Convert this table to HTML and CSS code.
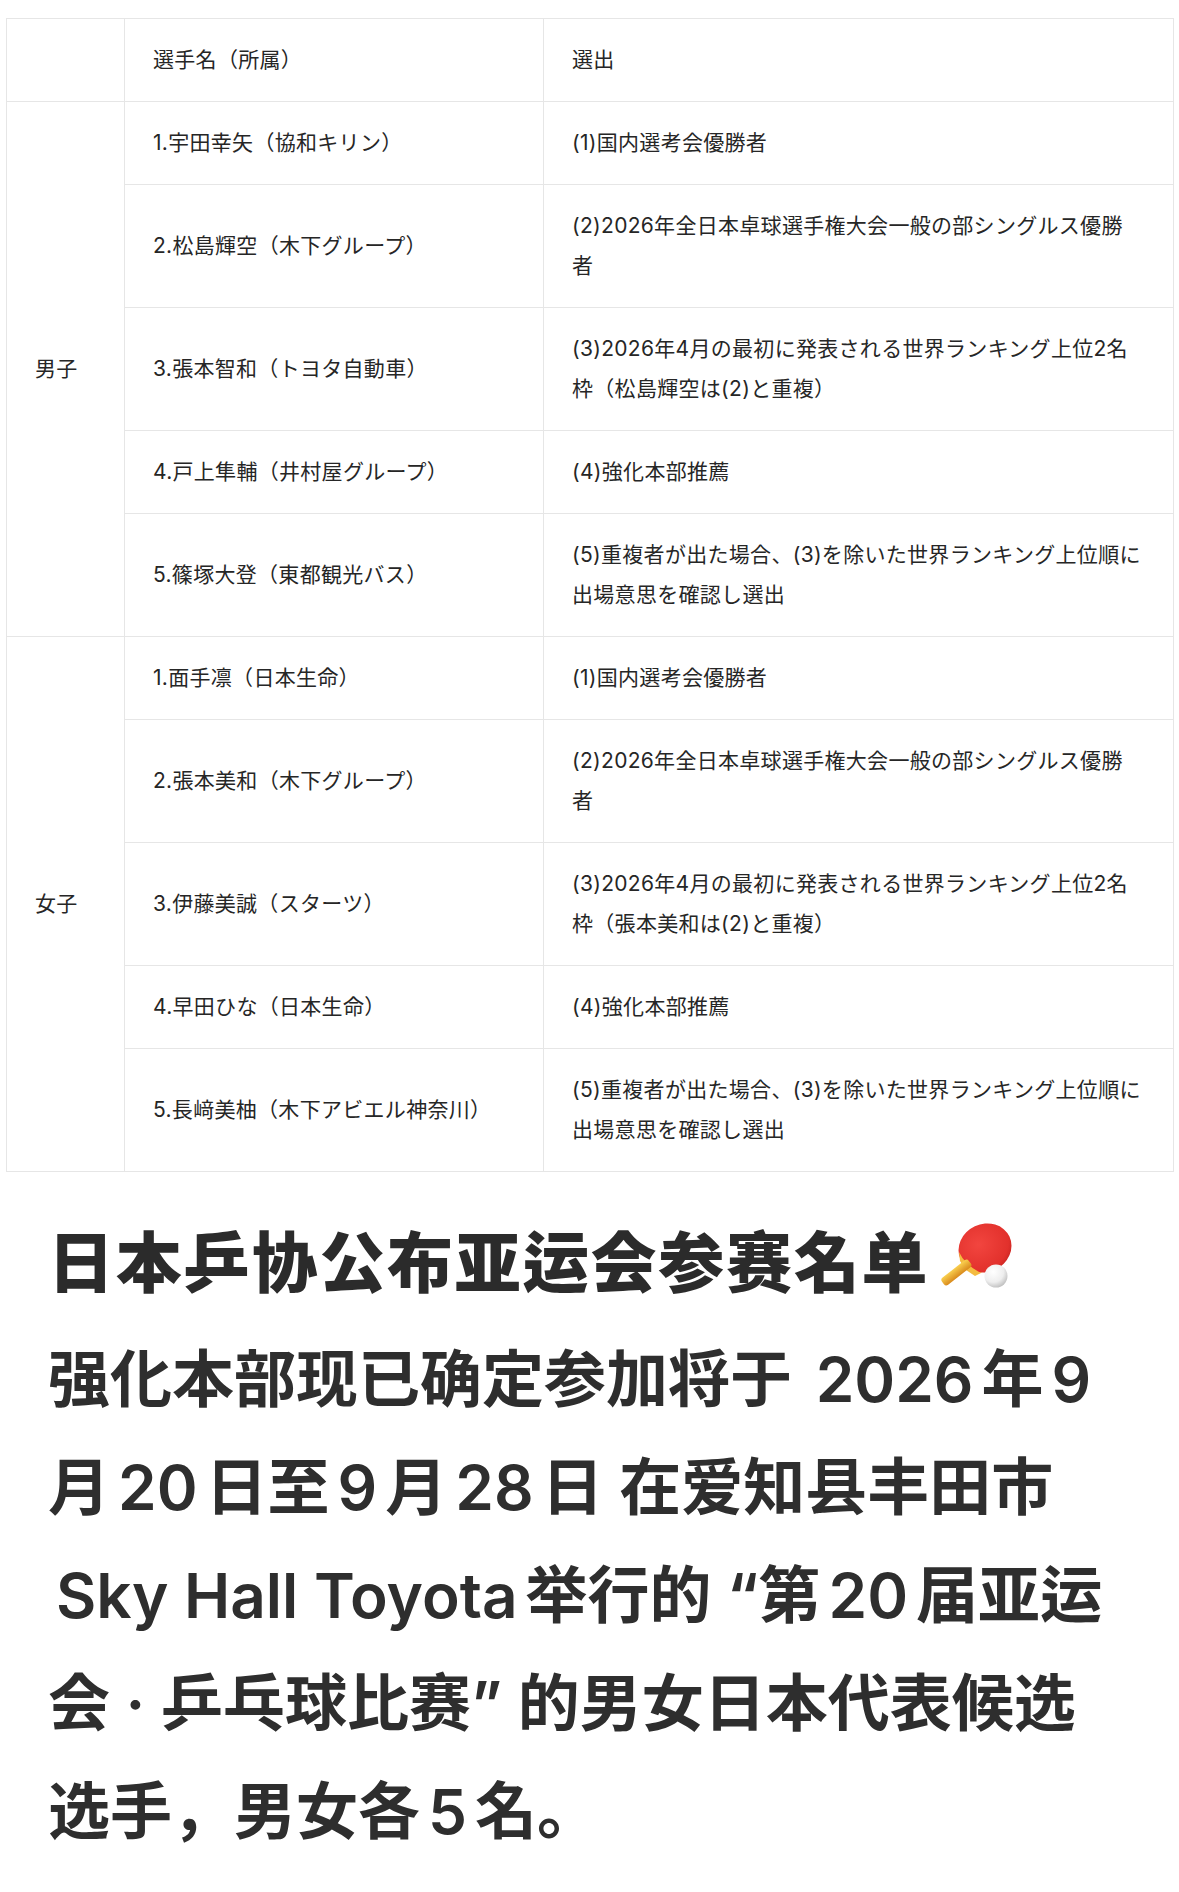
FILE: index.html
```html
<!DOCTYPE html>
<html lang="ja">
<head>
<meta charset="utf-8">
<title>日本乒协公布亚运会参赛名单</title>
<link rel="stylesheet" href="styles.css">
</head>
<body>
<main class="page">
  <table class="roster">
    <colgroup>
      <col class="c-cat">
      <col class="c-name">
      <col class="c-sel">
    </colgroup>
    <thead>
      <tr>
        <th class="cat"></th>
        <th class="name">選手名（所属）</th>
        <th class="sel">選出</th>
      </tr>
    </thead>
    <tbody>
      <tr>
        <td class="cat" rowspan="5">男子</td>
        <td class="name">1.宇田幸矢（協和キリン）</td>
        <td class="sel">(1)国内選考会優勝者</td>
      </tr>
      <tr>
        <td class="name">2.松島輝空（木下グループ）</td>
        <td class="sel">(2)2026年全日本卓球選手権大会一般の部シングルス優勝<br>者</td>
      </tr>
      <tr>
        <td class="name">3.張本智和（トヨタ自動車）</td>
        <td class="sel">(3)2026年4月の最初に発表される世界ランキング上位2名<br>枠（松島輝空は(2)と重複）</td>
      </tr>
      <tr>
        <td class="name">4.戸上隼輔（井村屋グループ）</td>
        <td class="sel">(4)強化本部推薦</td>
      </tr>
      <tr>
        <td class="name">5.篠塚大登（東都観光バス）</td>
        <td class="sel">(5)重複者が出た場合、(3)を除いた世界ランキング上位順に<br>出場意思を確認し選出</td>
      </tr>
      <tr>
        <td class="cat" rowspan="5">女子</td>
        <td class="name">1.面手凛（日本生命）</td>
        <td class="sel">(1)国内選考会優勝者</td>
      </tr>
      <tr>
        <td class="name">2.張本美和（木下グループ）</td>
        <td class="sel">(2)2026年全日本卓球選手権大会一般の部シングルス優勝<br>者</td>
      </tr>
      <tr>
        <td class="name">3.伊藤美誠（スターツ）</td>
        <td class="sel">(3)2026年4月の最初に発表される世界ランキング上位2名<br>枠（張本美和は(2)と重複）</td>
      </tr>
      <tr>
        <td class="name">4.早田ひな（日本生命）</td>
        <td class="sel">(4)強化本部推薦</td>
      </tr>
      <tr>
        <td class="name">5.長﨑美柚（木下アビエル神奈川）</td>
        <td class="sel">(5)重複者が出た場合、(3)を除いた世界ランキング上位順に<br>出場意思を確認し選出</td>
      </tr>
    </tbody>
  </table>

  <h1 class="title">日本乒协公布亚运会参赛名单<svg class="emoji" viewBox="0 0 76 70" width="76" height="70" aria-hidden="true">
      <defs>
        <linearGradient id="handle" x1="0" y1="0" x2="0" y2="1">
          <stop offset="0" stop-color="#f9cf4f"/>
          <stop offset="1" stop-color="#d98a1c"/>
        </linearGradient>
        <radialGradient id="rubber" cx="0.42" cy="0.38" r="0.7">
          <stop offset="0" stop-color="#f2453f"/>
          <stop offset="0.8" stop-color="#e2312c"/>
          <stop offset="1" stop-color="#c4221f"/>
        </radialGradient>
        <radialGradient id="ball" cx="0.38" cy="0.32" r="0.75">
          <stop offset="0" stop-color="#ffffff"/>
          <stop offset="0.6" stop-color="#eeeeee"/>
          <stop offset="1" stop-color="#b9b9b9"/>
        </radialGradient>
      </defs>
      <path d="M21 32 L43 52 L30 50 L24 45 Z" fill="#f3b43a"/>
      <ellipse cx="46" cy="27" rx="27" ry="24" transform="rotate(-25 46 27)" fill="url(#rubber)"/>
      <path d="M20 31 Q26 44 42 52 L36 55 L27 49 L21 40 Z" fill="#f4bb40"/>
      <rect x="0" y="-4.5" width="34" height="9" rx="3" transform="translate(4 62) rotate(-38)" fill="url(#handle)"/>
      <circle cx="57" cy="55" r="11.5" fill="url(#ball)"/>
    </svg></h1>

  <p class="lead">强化本部现已确定参加将于 <span class="lat">2026</span>年<span class="lat">9</span><br>月<span class="lat">20</span>日至<span class="lat">9</span>月<span class="lat">28</span>日 在爱知县丰田市<br><span class="lat">Sky Hall Toyota</span>举行的 “第<span class="lat">20</span>届亚运<br>会 · 乒乓球比赛” 的男女日本代表候选<br>选手，男女各<span class="lat">5</span>名。</p>
</main>
</body>
</html>
```

FILE: styles.css
```css
html, body {
  margin: 0;
  padding: 0;
  background: #ffffff;
}

.page {
  width: 1179px;
  padding: 18px 0 30px;
  box-sizing: border-box;
  color: #333333;
}

.roster {
  width: 1167px;
  margin: 0 6px;
  border-collapse: collapse;
  table-layout: fixed;
  font-family: "Inter", "Noto Sans CJK JP", sans-serif;
  font-size: 21px;
  line-height: 40px;
  letter-spacing: 0.3px;
  color: #262626;
}

.c-cat { width: 118px; }
.c-name { width: 419px; }
.c-sel { width: 630px; }

.roster th,
.roster td {
  border: 1px solid #e6e6e6;
  padding: 21px 28px;
  text-align: left;
  vertical-align: middle;
  font-weight: 400;
  white-space: nowrap;
}

.title {
  margin: 40px 0 0 48px;
  font-family: "Noto Sans CJK SC", sans-serif;
  font-weight: 900;
  font-size: 66px;
  line-height: 92px;
  letter-spacing: 1.8px;
  color: #2b2b2b;
}

.emoji {
  margin-left: 10px;
  vertical-align: -4px;
}

.lead {
  margin: 22px 10px 0 48px;
  font-family: "Inter", "Noto Sans CJK SC", sans-serif;
  font-weight: 600;
  font-size: 62px;
  line-height: 108px;
  color: #2e2e2e;
}

.lat {
  margin: 0 8px;
}
```
